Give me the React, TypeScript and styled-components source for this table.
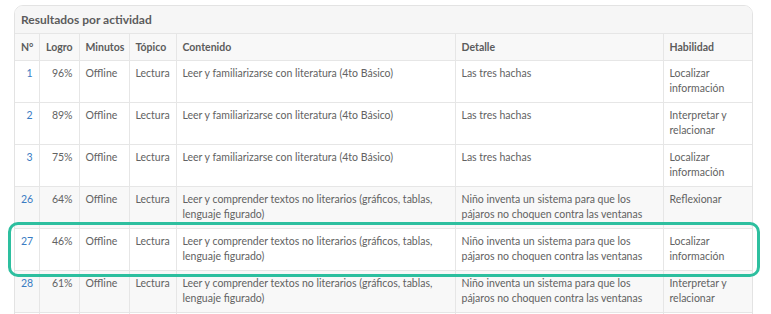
import React from 'react';
import styled, { createGlobalStyle } from 'styled-components';

const GlobalStyle = createGlobalStyle`
    body {
        margin: 0;
        background: #fff;
        font-family: Lato, "Noto Sans", sans-serif;
        color: #606060;
    }
`;

const Page = styled.div`
    position: relative;
    padding: 5px 18px 0 14px;
`;

const Card = styled.div`
    border: 1px solid #e3e3e3;
    border-radius: 9px;
    overflow: hidden;
    background: #fff;
`;

const CardHeader = styled.div`
    background: #f6f6f6;
    padding: 6px 6px 5px;
    font-size: 12px;
    line-height: 16px;
    font-weight: 700;
    color: #5c5c5c;
    border-bottom: 1px solid #e6e6e6;
`;

const Table = styled.table`
    width: 100%;
    border-collapse: collapse;
    table-layout: fixed;
    font-size: 10.5px;
    line-height: 15px;
`;

const Th = styled.th<{ $right?: boolean }>`
    background: #f8f8f8;
    text-align: ${p => (p.$right ? 'right' : 'left')};
    font-weight: 700;
    color: #5c5c5c;
    padding: 6px 6px 5px;
    border-left: 1px solid #e6e6e6;
    &:first-child {
        border-left: none;
    }
`;

const Row = styled.tr<{ $striped?: boolean }>`
    background: ${p => (p.$striped ? '#f8f8f8' : '#fff')};
    border-top: 1px solid #e6e6e6;
`;

const Td = styled.td<{ $right?: boolean; $link?: boolean }>`
    vertical-align: top;
    text-align: ${p => (p.$right ? 'right' : 'left')};
    color: ${p => (p.$link ? '#3a7cc3' : '#626262')};
    padding: 5px 6px 6px;
    height: 30px;
    border-left: 1px solid #e6e6e6;
    &:first-child {
        border-left: none;
    }
`;

const Highlight = styled.div`
    position: absolute;
    left: 8px;
    top: 222px;
    width: 752px;
    height: 55px;
    box-sizing: border-box;
    border: 3px solid #2dbf9f;
    border-radius: 10px;
    pointer-events: none;
`;

const lit = 'Leer y familiarizarse con literatura (4to Básico)';
const noLit = 'Leer y comprender textos no literarios (gráficos, tablas, lenguaje figurado)';
const pajaros = 'Niño inventa un sistema para que los pájaros no choquen contra las ventanas';

const rows = [
    { n: 1, logro: '96%', contenido: lit, detalle: 'Las tres hachas', habilidad: 'Localizar información', striped: false },
    { n: 2, logro: '89%', contenido: lit, detalle: 'Las tres hachas', habilidad: 'Interpretar y relacionar', striped: false },
    { n: 3, logro: '75%', contenido: lit, detalle: 'Las tres hachas', habilidad: 'Localizar información', striped: false },
    { n: 26, logro: '64%', contenido: noLit, detalle: pajaros, habilidad: 'Reflexionar', striped: true },
    { n: 27, logro: '46%', contenido: noLit, detalle: pajaros, habilidad: 'Localizar información', striped: false },
    { n: 28, logro: '61%', contenido: noLit, detalle: pajaros, habilidad: 'Interpretar y relacionar', striped: true },
];

const App: React.FC = () => {
    return (
        <Page>
            <GlobalStyle />
            <Card>
                <CardHeader>Resultados por actividad</CardHeader>
                <Table>
                    <colgroup>
                        <col style={{ width: 24 }} />
                        <col style={{ width: 40 }} />
                        <col style={{ width: 50 }} />
                        <col style={{ width: 47 }} />
                        <col style={{ width: 279 }} />
                        <col style={{ width: 208 }} />
                        <col />
                    </colgroup>
                    <thead>
                        <tr>
                            <Th>N°</Th>
                            <Th $right>Logro</Th>
                            <Th>Minutos</Th>
                            <Th>Tópico</Th>
                            <Th>Contenido</Th>
                            <Th>Detalle</Th>
                            <Th>Habilidad</Th>
                        </tr>
                    </thead>
                    <tbody>
                        {rows.map(r => (
                            <Row key={r.n} $striped={r.striped}>
                                <Td $right $link>{r.n}</Td>
                                <Td $right>{r.logro}</Td>
                                <Td>Offline</Td>
                                <Td>Lectura</Td>
                                <Td>{r.contenido}</Td>
                                <Td>{r.detalle}</Td>
                                <Td>{r.habilidad}</Td>
                            </Row>
                        ))}
                        <Row>
                            <Td />
                            <Td />
                            <Td />
                            <Td />
                            <Td />
                            <Td />
                            <Td />
                        </Row>
                    </tbody>
                </Table>
            </Card>
            <Highlight />
        </Page>
    );
};

export default App;
